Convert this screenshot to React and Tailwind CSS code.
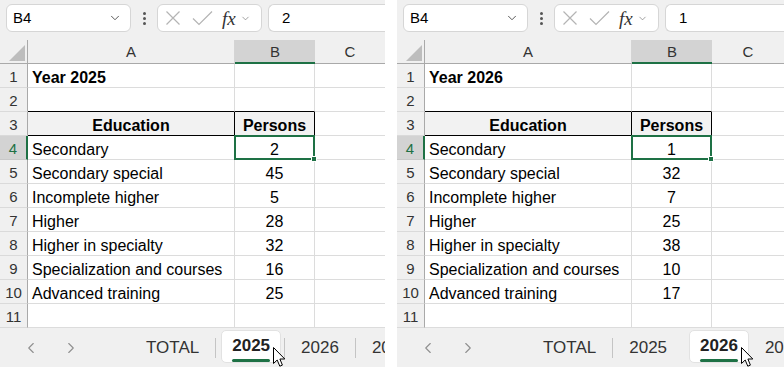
import { ChevronDown, ChevronLeft, ChevronRight } from "lucide-react";

const FONT = { fontFamily: '"Liberation Sans", Arial, sans-serif' };

const ROWS_2025 = [
  ["Secondary", 2],
  ["Secondary special", 45],
  ["Incomplete higher", 5],
  ["Higher", 28],
  ["Higher in specialty", 32],
  ["Specialization and courses", 16],
  ["Advanced training", 25],
];

const ROWS_2026 = [
  ["Secondary", 1],
  ["Secondary special", 32],
  ["Incomplete higher", 7],
  ["Higher", 25],
  ["Higher in specialty", 38],
  ["Specialization and courses", 10],
  ["Advanced training", 17],
];

// mouse pointer over the active tab
const Pointer = () => (
  <svg width="14" height="22" viewBox="0 0 14 22" className="absolute right-[-6px] top-[15px] z-20">
    <path
      d="M1.5 1.5 L1.5 17.5 L5.2 14 L7.8 20.2 L10.4 19.1 L7.9 13 L12.8 13 Z"
      fill="white"
      stroke="black"
      strokeWidth="1"
      strokeLinejoin="round"
    />
  </svg>
);

const FormulaBar = ({ value }) => (
  <div className="h-[40px] flex items-start pt-[4px] pl-[6px] gap-[6px]">
    {/* Name box */}
    <div className="w-[125px] h-[28px] shrink-0 bg-white border border-[#d6d6d6] rounded-[6px] flex items-center justify-between pl-[6px] pr-[8px]">
      <span className="text-[15px] text-black">B4</span>
      <ChevronDown size={14} strokeWidth={1.5} className="text-[#444] shrink-0" />
    </div>
    {/* vertical dots */}
    <div className="w-[14px] h-[28px] shrink-0 flex flex-col items-center justify-center gap-[2px]">
      <span className="w-[3px] h-[3px] rounded-full bg-[#555]"></span>
      <span className="w-[3px] h-[3px] rounded-full bg-[#555]"></span>
      <span className="w-[3px] h-[3px] rounded-full bg-[#555]"></span>
    </div>
    {/* cancel / enter / fx */}
    <div className="w-[105px] h-[28px] shrink-0 bg-white border border-[#d6d6d6] rounded-[6px] flex items-center pl-[7px]">
      <svg width="16" height="16" viewBox="0 0 16 16" className="text-[#b4b4b4] shrink-0">
        <path d="M1.5 1.5 L14.5 14.5 M14.5 1.5 L1.5 14.5" stroke="currentColor" strokeWidth="1.2" fill="none" />
      </svg>
      <svg width="21" height="16" viewBox="0 0 21 16" className="ml-[11px] text-[#b4b4b4] shrink-0">
        <path d="M1 8.5 L7 14.5 L20 1.5" stroke="currentColor" strokeWidth="1.2" fill="none" />
      </svg>
      <span
        className="ml-[9px] text-[19px] italic text-[#333] leading-none"
        style={{ fontFamily: '"Liberation Serif", "DejaVu Serif", serif' }}
      >
        fx
      </span>
      <ChevronDown size={11} strokeWidth={1.5} className="ml-[4px] text-[#777] shrink-0" />
    </div>
    {/* formula input */}
    <div className="flex-1 h-[28px] bg-white border border-[#d6d6d6] border-r-0 rounded-l-[6px] flex items-center pl-[13px]">
      <span className="text-[15px] text-black">{value}</span>
    </div>
  </div>
);

const ColumnHeaders = () => (
  <div className="h-[24px] flex text-[15px] text-[#333]">
    <div className="w-[28px] shrink-0 border-r border-b border-[#a9a9a9] flex items-end justify-end pr-[2px] pb-[2px]">
      <svg width="16" height="16" viewBox="0 0 16 16">
        <path d="M16 0 L16 16 L0 16 Z" fill="#bdbdbd" />
      </svg>
    </div>
    <div className="w-[207px] shrink-0 border-r border-b border-[#a9a9a9] border-r-[#d4d4d4] flex items-center justify-center pt-[2px]">A</div>
    <div className="w-[80px] shrink-0 bg-[#d3d3d3] border-b-2 border-[#1e7145] flex items-center justify-center pt-[3px]">B</div>
    <div className="flex-1 border-b border-[#a9a9a9] flex items-center justify-center pt-[2px]">C</div>
  </div>
);

const Row = ({ n, a, b, kind }) => {
  const selected = kind === "selected";
  const head = kind === "head";
  const above = kind === "above";
  return (
    <div className="h-[24px] flex text-[16px] text-black">
      <div
        className={
          "w-[28px] shrink-0 flex items-center justify-center text-[15px] border-b pt-[4px] " +
          (selected
            ? "bg-[#d3d3d3] text-[#1e7145] border-r-2 border-r-[#1e7145] border-b-[#c8c8c8]"
            : "bg-[#f0f0f0] text-[#333] border-r border-r-[#a9a9a9] border-b-[#dadada]")
        }
      >
        {n}
      </div>
      <div
        className={
          "w-[207px] shrink-0 flex items-center px-[4px] pt-[4px] border-r border-b " +
          (head
            ? "bg-[#f2f2f2] border-black justify-center font-bold"
            : above
            ? "bg-white border-r-[#dcdcdc] border-b-black"
            : "bg-white border-[#dcdcdc]") +
          (n === 1 ? " font-bold" : "")
        }
      >
        {a}
      </div>
      <div
        className={
          "w-[80px] shrink-0 flex items-center justify-center pt-[4px] border-r border-b relative " +
          (head
            ? "bg-[#f2f2f2] border-black font-bold"
            : above
            ? "bg-white border-r-[#dcdcdc] border-b-black"
            : "bg-white border-[#dcdcdc]")
        }
      >
        {b}
        {selected && (
          <div className="absolute -left-px -top-px -right-px -bottom-px border-2 border-[#1e7145] z-10">
            <div className="absolute -right-[4px] -bottom-[4px] w-[6px] h-[6px] bg-[#1e7145] border border-white"></div>
          </div>
        )}
      </div>
      <div className="flex-1 bg-white border-b border-[#dcdcdc]"></div>
    </div>
  );
};

const TabBar = ({ items }) => (
  <div className="h-[39px] flex items-center bg-[#f0f0f0] text-[17px] text-[#333]">
    <ChevronLeft size={18} strokeWidth={1.5} className="ml-[22px] text-[#8f8f8f] shrink-0" />
    <ChevronRight size={18} strokeWidth={1.5} className="ml-[22px] text-[#8f8f8f] shrink-0" />
    <div className="ml-[50px] flex items-center h-full">
      {items.map((it, i) => {
        if (it.type === "sep") return <div key={i} className="w-px h-[20px] bg-[#c4c4c4] shrink-0"></div>;
        if (it.type === "gap") return <div key={i} className="shrink-0" style={{ width: it.w }}></div>;
        if (it.type === "active")
          return (
            <div
              key={i}
              className="relative shrink-0 self-start mt-[2px] h-[33px] px-[10px] bg-white rounded-[5px] border border-[#e2e2e2] flex flex-col items-center pt-[5px]"
            >
              <span className="font-bold text-[#222] leading-[20px]">{it.label}</span>
              <span className="mt-[3px] w-full h-[3px] rounded-full bg-[#1e7145]"></span>
              <Pointer />
            </div>
          );
        return (
          <div key={i} className="shrink-0 px-[16px] whitespace-nowrap">
            {it.label}
          </div>
        );
      })}
    </div>
  </div>
);

const Sheet = ({ year, rows, tabs, className }) => {
  const all = [
    { a: `Year ${year}`, b: "" },
    { a: "", b: "", kind: "above" },
    { a: "Education", b: "Persons", kind: "head" },
    ...rows.map(([a, b], i) => ({ a, b, kind: i === 0 ? "selected" : "" })),
    { a: "", b: "" },
  ];
  return (
    <div className={"bg-[#f0f0f0] overflow-hidden flex flex-col " + className} style={FONT}>
      <FormulaBar value={rows[0][1]} />
      <ColumnHeaders />
      {all.map((r, i) => (
        <Row key={i} n={i + 1} a={r.a} b={r.b} kind={r.kind} />
      ))}
      <TabBar items={tabs} />
    </div>
  );
};

export default function App() {
  return (
    <div className="w-[784px] h-[367px] bg-white flex gap-[12px] overflow-hidden">
      <Sheet
        year={2025}
        rows={ROWS_2025}
        className="w-[385px] shrink-0"
        tabs={[
          { label: "TOTAL" },
          { type: "sep" },
          { type: "gap", w: 5 },
          { type: "active", label: "2025" },
          { type: "gap", w: 3 },
          { type: "sep" },
          { label: "2026" },
          { type: "sep" },
          { label: "2027" },
        ]}
      />
      <Sheet
        year={2026}
        rows={ROWS_2026}
        className="flex-1"
        tabs={[
          { label: "TOTAL" },
          { type: "sep" },
          { label: "2025" },
          { type: "gap", w: 6 },
          { type: "active", label: "2026" },
          { label: "2027" },
        ]}
      />
    </div>
  );
}
